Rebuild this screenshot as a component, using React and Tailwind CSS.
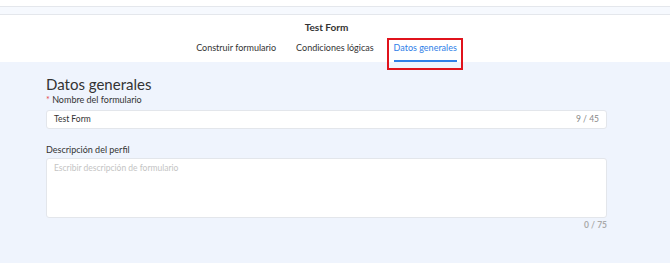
export default function App() {
  return (
    <div className="h-[263px] w-[670px] overflow-hidden bg-[#eff4fd] font-['Lato',sans-serif] text-[#333]">
      <div className="h-[6px] bg-white" />
      <div className="h-[9px] border-y border-[#e4e7ec] bg-[#f6f9fe]" />
      <header className="flex flex-col items-center bg-white pr-[17px] pt-[5px]">
        <h1 className="text-[10px] font-bold leading-[14px] text-[#333]">Test Form</h1>
        <nav className="mt-[7px] flex gap-[20px] text-[9px] leading-[14px]">
          <span className="pb-[7px]">Construir formulario</span>
          <span className="pb-[7px]">Condiciones lógicas</span>
          <span className="relative pb-[7px] text-[#2f80e8]">
            Datos generales
            <span className="absolute bottom-0 left-0 right-0 h-[2px] bg-[#2f80e8]" />
            <span className="absolute -left-[7px] -right-[6px] -top-[3px] -bottom-[8px] z-10 border-2 border-[#e0131c]" />
          </span>
        </nav>
      </header>
      <main className="px-[46px] pr-[63px] pt-[13px]">
        <h2 className="text-[15px] leading-[18px] text-[#333]">Datos generales</h2>
        <label className="block text-[9px] leading-[14px]">
          <span className="text-[#e5484d]">* </span>Nombre del formulario
        </label>
        <div className="mt-[3px] flex h-[19px] items-center justify-between rounded-[3px] border border-[#e3e6eb] bg-white px-[7px] text-[8.5px]">
          <span>Test Form</span>
          <span className="text-[#888]">9 / 45</span>
        </div>
        <label className="mt-[14px] block text-[9px] leading-[14px]">Descripción del perfil</label>
        <div className="mt-[1px] h-[60px] rounded-[3px] border border-[#e3e6eb] bg-white px-[7px] pt-[3px] text-[8.5px] text-[#c4c4c4]">
          Escribir descripción de formulario
        </div>
        <div className="mt-[1px] text-right text-[8.5px] font-bold leading-[12px] text-[#aaa]">0 / 75</div>
      </main>
    </div>
  );
}
